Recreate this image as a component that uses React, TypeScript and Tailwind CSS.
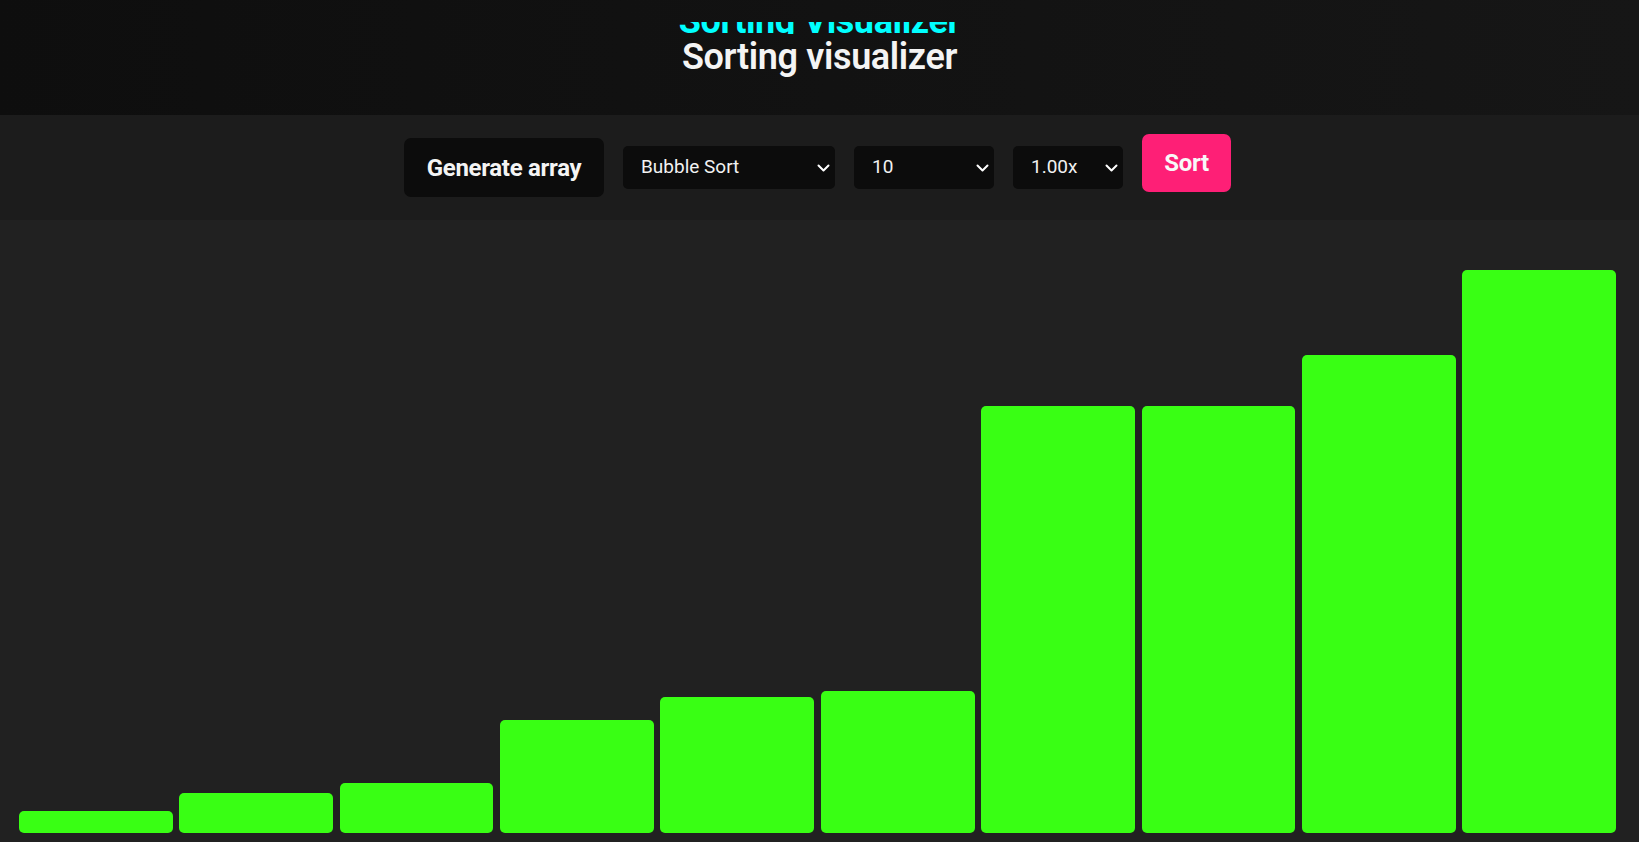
import React from "react";

const bars = [22, 40, 50, 113, 136, 142, 427, 427, 478, 563];

function Chevron() {
	return (
		<svg width="13" height="8" viewBox="0 0 13 8" className="pointer-events-none absolute right-[5px] top-1/2 -translate-y-1/2">
			<polyline points="1.5,1.5 6.5,6.5 11.5,1.5" fill="none" stroke="#ffffff" strokeWidth="2" strokeLinecap="round" strokeLinejoin="round" />
		</svg>
	);
}

function Select({ width, options, value }: { width: string, options: string[], value: string }) {
	return (
		<div className={ `relative ${ width }` }>
			<select defaultValue={ value } className="w-full h-[43px] appearance-none rounded-[5px] bg-[#0c0c0c] pl-[18px] pr-6 text-[19px] text-[#f2f2f2] outline-none">
				{ options.map(o => <option key={ o } value={ o }>{ o }</option>) }
			</select>
			<Chevron />
		</div>
	);
}

function App() {
	return (
		<div className="flex h-[842px] w-full flex-col bg-[#212121]" style={ { fontFamily: "Roboto, 'Liberation Sans', sans-serif" } }>
			<header className="flex h-[115px] shrink-0 flex-col items-center bg-gradient-to-r from-[#0e0e0e] to-[#161616]">
				<div className="mt-[22px] h-[12px] overflow-hidden">
					<h2 className="mt-[-19px] text-[36px] font-bold leading-none tracking-[-0.4px] text-[#00ffff]">Sorting Visualizer</h2>
				</div>
				<h1 className="mt-[5px] text-[36px] font-semibold leading-none tracking-[-0.35px] text-[#f4f4f4]">Sorting visualizer</h1>
			</header>

			<div className="flex h-[105px] shrink-0 items-center justify-center gap-[19px] pr-[4px] bg-[#1c1c1c]">
				<button className="h-[59px] w-[200px] rounded-[7px] bg-[#0c0c0c] text-[24px] font-bold tracking-[-0.3px] text-[#f4f4f4]">Generate array</button>
				<Select width="w-[212px]" value="Bubble Sort" options={ ["Bubble Sort", "Selection Sort", "Insertion Sort", "Merge Sort", "Quick Sort"] } />
				<Select width="w-[140px]" value="10" options={ ["10", "20", "50", "100"] } />
				<Select width="w-[110px]" value="1.00x" options={ ["0.50x", "1.00x", "2.00x", "4.00x"] } />
				<button className="mb-[10px] h-[58px] w-[89px] rounded-[7px] bg-[#fe1f76] text-[24px] font-bold tracking-[-0.3px] text-[#f8f8f8]">Sort</button>
			</div>

			<main className="flex flex-1 items-end gap-[6.67px] pb-[9px] pl-[19px] pr-[23px]">
				{ bars.map((h, i) => (
					<div key={ i } className="flex-1 rounded-[5px] bg-[#39ff14]" style={ { height: `${ h }px` } } />
				)) }
			</main>
		</div>
	);
}

export default App;
